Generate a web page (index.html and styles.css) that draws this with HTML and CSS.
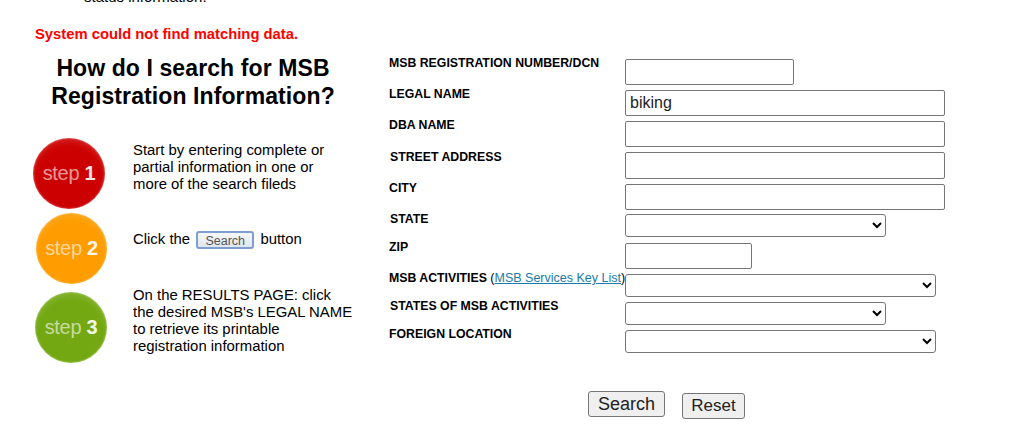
FILE: index.html
```html
<!DOCTYPE html>
<html lang="en">
<head>
    <meta charset="UTF-8">
    <meta name="viewport" content="width=device-width, initial-scale=1.0">
    <title>MSB Registrant Search</title>
    <link rel="stylesheet" href="styles.css">
</head>
<body>
    <p class="status-note">status information.</p>
    <p class="error-msg">System could not find matching data.</p>

    <div class="search-layout">
        <aside class="help">
            <h1>How do I search for MSB Registration Information?</h1>

            <div class="step step-one">
                <div class="badge badge-red">step <b>1</b></div>
                <p>Start by entering complete or<br>partial information in one or<br>more of the search fileds</p>
            </div>
            <div class="step step-two">
                <div class="badge badge-orange">step <b>2</b></div>
                <p>Click the <span class="fake-btn">Search</span> button</p>
            </div>
            <div class="step step-three">
                <div class="badge badge-green">step <b>3</b></div>
                <p>On the RESULTS PAGE: click<br>the desired MSB's LEGAL NAME<br>to retrieve its printable<br>registration information</p>
            </div>
        </aside>

        <form class="search-form" onsubmit="return false">
            <div class="row row-dcn">
                <label for="dcn">MSB REGISTRATION NUMBER/DCN</label>
                <input type="text" id="dcn" class="w-short">
            </div>
            <div class="row row-legal">
                <label for="legal">LEGAL NAME</label>
                <input type="text" id="legal" class="w-long" value="biking">
            </div>
            <div class="row row-dba">
                <label for="dba">DBA NAME</label>
                <input type="text" id="dba" class="w-long">
            </div>
            <div class="row row-street">
                <label for="street">STREET ADDRESS</label>
                <input type="text" id="street" class="w-long">
            </div>
            <div class="row row-city">
                <label for="city">CITY</label>
                <input type="text" id="city" class="w-long">
            </div>
            <div class="row row-state">
                <label for="state">STATE</label>
                <select id="state" class="w-state"><option></option></select>
            </div>
            <div class="row row-zip">
                <label for="zip">ZIP</label>
                <input type="text" id="zip" class="w-zip">
            </div>
            <div class="row row-activity">
                <label for="activity">MSB ACTIVITIES <span class="key-link">(<a href="#key">MSB Services Key List</a>)</span></label>
                <select id="activity" class="w-activity"><option></option></select>
            </div>
            <div class="row row-activity-states">
                <label for="activity-states">STATES OF MSB ACTIVITIES</label>
                <select id="activity-states" class="w-state"><option></option></select>
            </div>
            <div class="row row-foreign">
                <label for="foreign">FOREIGN LOCATION</label>
                <select id="foreign" class="w-activity"><option></option></select>
            </div>

            <div class="actions">
                <button type="submit" class="btn-search">Search</button>
                <button type="reset" class="btn-reset">Reset</button>
            </div>
        </form>
    </div>
</body>
</html>
```

FILE: styles.css
```css
body {
    font-family: "Liberation Sans", Arial, sans-serif;
    margin: 0;
    padding: 0;
    background-color: white;
    color: #000;
    overflow: hidden;
}

.status-note {
    margin: -9px 0 0 84px;
    font-size: 15px;
    line-height: 12px;
}

.error-msg {
    margin: 23px 0 0 35px;
    font-size: 14.8px;
    font-weight: bold;
    line-height: 16px;
    color: #f00;
}

.search-layout {
    display: flex;
}

.help {
    width: 389px;
    flex-shrink: 0;
}

.help h1 {
    width: 300px;
    margin: 12px 0 0 43px;
    font-size: 23px;
    letter-spacing: 0.1px;
    line-height: 28px;
    text-align: center;
}

.step {
    display: flex;
    align-items: center;
}

.step p {
    margin: 0;
    font-size: 14.9px;
    line-height: 17px;
    white-space: nowrap;
}

.step-one {
    margin: 28px 0 0 33px;
}

.step-one p {
    margin: -12px 0 0 28px;
}

.step-two {
    margin: 4px 0 0 36px;
}

.step-two p {
    margin: -17px 0 0 26px;
}

.step-three {
    margin: 8px 0 0 35px;
}

.step-three p {
    margin: -14px 0 0 26px;
}

.badge {
    width: 71px;
    height: 71px;
    border-radius: 50%;
    flex-shrink: 0;
    text-align: center;
    line-height: 71px;
    font-size: 20px;
    letter-spacing: -0.3px;
    color: rgba(255, 255, 255, 0.6);
}

.badge b {
    color: white;
    opacity: 0.9;
}

.badge-red {
    width: 72px;
    background: radial-gradient(circle at 50% 55%, #cc0000 0%, #cc0000 60%, #d01010 82%, #e25a5a 100%);
    box-shadow: inset 0 0 2px rgba(255, 200, 200, 0.8), inset 0 5px 6px rgba(255, 255, 255, 0.08);
}

.badge-orange {
    background: radial-gradient(circle at 50% 55%, #ff9c00 0%, #ff9c00 60%, #fda210 82%, #fbbe58 100%);
    box-shadow: inset 0 0 2px rgba(255, 230, 180, 0.8), inset 0 5px 6px rgba(255, 255, 255, 0.08);
}

.badge-green {
    width: 72px;
    background: radial-gradient(circle at 50% 55%, #73a812 0%, #73a812 60%, #7cae20 82%, #aacb6c 100%);
    box-shadow: inset 0 0 2px rgba(225, 240, 190, 0.8), inset 0 5px 6px rgba(255, 255, 255, 0.08);
}

.fake-btn {
    display: inline-block;
    width: 54px;
    height: 14px;
    margin: 0 2px;
    border: 2px solid #7f9fd0;
    border-radius: 3px;
    background: linear-gradient(#f7f7f7, #dfe6ee);
    color: #555;
    font-size: 12.5px;
    line-height: 16px;
    text-align: center;
    vertical-align: -1px;
}

.search-form {
    flex: 1;
    margin-top: 17px;
}

.row {
    display: flex;
    align-items: flex-start;
}

.row label {
    width: 236px;
    flex-shrink: 0;
    font-size: 12.3px;
    font-weight: bold;
    line-height: 14px;
    white-space: nowrap;
}

.row input,
.row select {
    box-sizing: border-box;
    margin: 0;
    background-color: white;
    font-family: "Liberation Sans", Arial, sans-serif;
}

.row input {
    height: 26px;
    padding: 1px 4px;
    border: 1px solid #767676;
    border-radius: 2px;
    font-size: 16px;
    color: #222;
}

.row select {
    height: 23px;
    border: 1px solid #767676;
    border-radius: 3px;
    font-size: 14px;
}

.w-short {
    width: 169px;
}

.w-long {
    width: 320px;
}

.w-state {
    width: 261px;
}

.w-zip {
    width: 127px;
}

.w-activity {
    width: 311px;
}

.row-legal,
.row-dba,
.row-street,
.row-city,
.row-activity,
.row-activity-states,
.row-foreign {
    margin-top: 5px;
}

.row-state {
    margin-top: 4px;
}

.row-zip {
    margin-top: 6px;
}

.row-street input {
    height: 27px;
}

.row-dcn label,
.row-legal label,
.row-dba label,
.row-city label,
.row-zip label,
.row-activity label,
.row-activity-states label,
.row-foreign label {
    margin-top: -3px;
}

.row-street label,
.row-state label {
    margin-top: -2px;
}

.row-street label,
.row-state label,
.row-activity-states label {
    padding-left: 1px;
    width: 235px;
}

.key-link {
    font-size: 12.5px;
    font-weight: normal;
}

.key-link a {
    color: #1a7aa8;
}

.actions {
    display: flex;
    align-items: flex-start;
    gap: 17px;
    margin: 38px 0 0 199px;
}

.actions button {
    box-sizing: border-box;
    height: 26px;
    padding: 0;
    background-color: #efefef;
    border: 1px solid #767676;
    border-radius: 3px;
    font-family: "Liberation Sans", Arial, sans-serif;
    color: #222;
}

.btn-search {
    width: 77px;
    font-size: 18px;
}

.btn-reset {
    width: 63px;
    margin-top: 2px;
    font-size: 17px;
}
```
